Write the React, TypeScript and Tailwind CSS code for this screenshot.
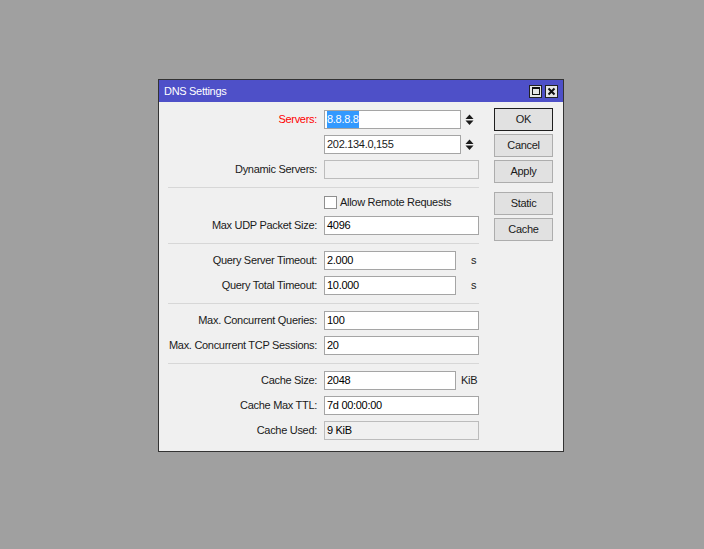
import React from "react";

const FONT = "font-['Liberation_Sans',Arial,sans-serif] text-[11px] tracking-[-0.3px]";

function Field({ w, disabled, children }: { w: string; disabled?: boolean; children?: React.ReactNode }) {
  return (
    <div
      className={`${w} h-[19px] border flex items-center pl-[2px] ${
        disabled ? "bg-[#f0f0f0] border-[#bcbcbc]" : "bg-white border-[#a5a5a5]"
      }`}
    >
      {children}
    </div>
  );
}

function Spinner() {
  return (
    <svg width="9" height="13" viewBox="0 0 9 13" className="ml-[4px]">
      <path d="M0.5 6 L4.5 1.5 L8.5 6 Z" fill="#1a1a1a" />
      <path d="M0.5 7.5 L8.5 7.5 L4.5 12 Z" fill="#1a1a1a" />
    </svg>
  );
}

function Row({
  label,
  red,
  children,
}: {
  label?: string;
  red?: boolean;
  children: React.ReactNode;
}) {
  return (
    <div className="flex items-center h-[19px]">
      <div className={`w-[150px] text-right pr-[1px] ${red ? "text-[#ff0000]" : "text-[#1a1a1a]"}`}>
        {label}
      </div>
      <div className="ml-[6px] flex items-center">{children}</div>
    </div>
  );
}

function Sep() {
  return <div className="h-px bg-[#d7d7d7] mt-[8px] mb-[7px]" />;
}

function Btn({ label, primary }: { label: string; primary?: boolean }) {
  return (
    <div
      className={`w-[59px] h-[23px] flex items-center justify-center bg-[#e1e1e1] border ${
        primary ? "border-[#1e1e1e]" : "border-[#adadad]"
      } text-[#1a1a1a]`}
    >
      {label}
    </div>
  );
}

export default function App() {
  return (
    <div className={`min-h-screen bg-[#a0a0a0] pt-[79px] pl-[158px] ${FONT}`}>
      <div className="w-[406px] h-[373px] border border-[#333] bg-[#f0f0f0] flex flex-col">
        <div className="h-[22px] bg-[#4e50c8] flex items-center pl-[5px] pr-[5px]">
          <span className="text-white flex-1 pt-[1px]">DNS Settings</span>
          <div className="flex gap-[3px]">
            <div className="w-[13px] h-[13px] border border-[#222] bg-[#e6e6e6] flex items-center justify-center">
              <div className="w-[8px] h-[8px] border border-[#111] border-t-2" />
            </div>
            <div className="w-[13px] h-[13px] border border-[#222] bg-[#e6e6e6] flex items-center justify-center">
              <svg width="9" height="9" viewBox="0 0 9 9">
                <path d="M1.5 1.5 L7.5 7.5 M7.5 1.5 L1.5 7.5" stroke="#111" strokeWidth="2" />
              </svg>
            </div>
          </div>
        </div>
        <div className="flex pt-[8px] pl-[9px]">
          <div className="w-[311px] flex flex-col">
            <div className="flex flex-col gap-[6px]">
              <Row label="Servers:" red>
                <Field w="w-[137px]">
                  <span className="bg-[#3399ff] text-white">8.8.8.8</span>
                </Field>
                <Spinner />
              </Row>
              <Row>
                <Field w="w-[137px]">
                  <span className="text-[#1a1a1a]">202.134.0,155</span>
                </Field>
                <Spinner />
              </Row>
              <Row label="Dynamic Servers:">
                <Field w="w-[155px]" disabled />
              </Row>
            </div>
            <Sep />
            <div className="flex flex-col gap-[6px]">
              <div className="flex items-center h-[15px] pl-[156px]">
                <div className="w-[13px] h-[13px] bg-white border border-[#8f8f8f]" />
                <span className="ml-[3px] text-[#1a1a1a]">Allow Remote Requests</span>
              </div>
              <Row label="Max UDP Packet Size:">
                <Field w="w-[155px]">4096</Field>
              </Row>
            </div>
            <Sep />
            <div className="flex flex-col gap-[6px]">
              <Row label="Query Server Timeout:">
                <Field w="w-[132px]">2.000</Field>
                <span className="ml-[15px] text-[#1a1a1a]">s</span>
              </Row>
              <Row label="Query Total Timeout:">
                <Field w="w-[132px]">10.000</Field>
                <span className="ml-[15px] text-[#1a1a1a]">s</span>
              </Row>
            </div>
            <Sep />
            <div className="flex flex-col gap-[6px]">
              <Row label="Max. Concurrent Queries:">
                <Field w="w-[155px]">100</Field>
              </Row>
              <Row label="Max. Concurrent TCP Sessions:">
                <Field w="w-[155px]">20</Field>
              </Row>
            </div>
            <Sep />
            <div className="flex flex-col gap-[6px]">
              <Row label="Cache Size:">
                <Field w="w-[132px]">2048</Field>
                <span className="ml-[5px] text-[#1a1a1a]">KiB</span>
              </Row>
              <Row label="Cache Max TTL:">
                <Field w="w-[155px]">7d 00:00:00</Field>
              </Row>
              <Row label="Cache Used:">
                <Field w="w-[155px]" disabled>
                  9 KiB
                </Field>
              </Row>
            </div>
          </div>
          <div className="ml-[15px] flex flex-col gap-[3px] -mt-[2px]">
            <Btn label="OK" primary />
            <Btn label="Cancel" />
            <Btn label="Apply" />
            <div className="h-[3px]" />
            <Btn label="Static" />
            <Btn label="Cache" />
          </div>
        </div>
      </div>
    </div>
  );
}
